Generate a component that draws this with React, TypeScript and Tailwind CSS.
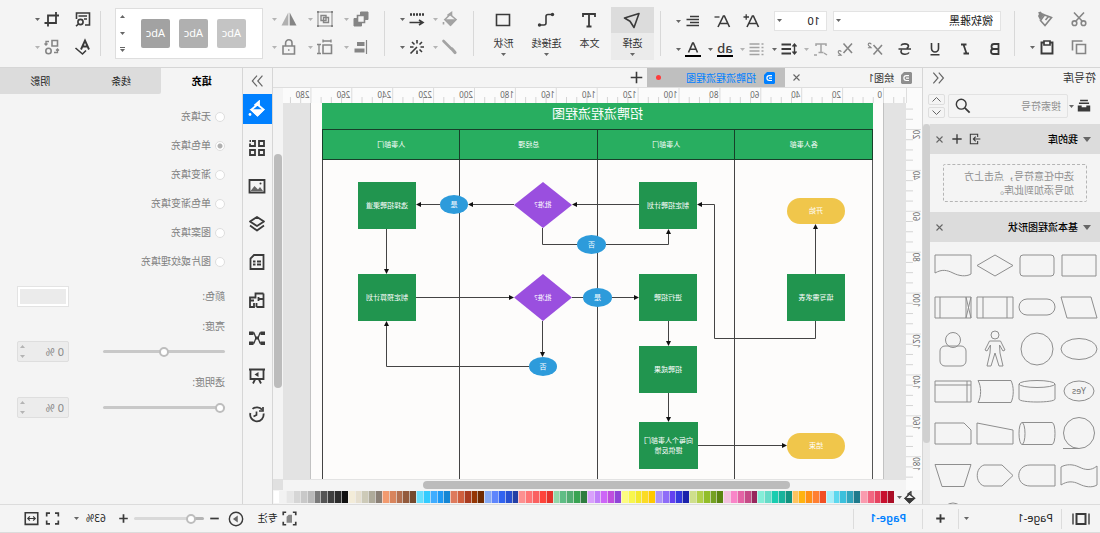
import React from "react";

type Kids = { children?: React.ReactNode };

/* ---------- small building blocks ---------- */

function Icon({ children, size = 18, color = "text-[#3a3a3a]" }: Kids & { size?: number; color?: string }) {
  return (
    <svg
      width={size}
      height={size}
      viewBox="0 0 18 18"
      fill="none"
      stroke="currentColor"
      strokeWidth={1.6}
      className={`shrink-0 ${color}`}
      aria-hidden="true"
    >
      {children}
    </svg>
  );
}

function Caret({ light = false }: { light?: boolean }) {
  return (
    <svg width="5" height="3" viewBox="0 0 5 3" className={light ? "text-[#b4b4b4]" : "text-[#666]"} aria-hidden="true">
      <path d="M0 0h5L2.5 3z" fill="currentColor" />
    </svg>
  );
}

function Tool({
  label,
  children,
  caret,
  tone = "dark",
}: Kids & { label: string; caret?: boolean; tone?: "dark" | "mid" | "light" }) {
  const color = tone === "dark" ? "text-[#3a3a3a]" : tone === "mid" ? "text-[#858585]" : "text-[#a3a3a3]";
  return (
    <button type="button" aria-label={label} className="flex h-7 shrink-0 items-center">
      <span className="flex w-5 justify-center">
        <Icon color={color}>{children}</Icon>
      </span>
      {caret && (
        <span className="flex w-2 justify-center">
          <Caret light={tone !== "dark"} />
        </span>
      )}
    </button>
  );
}

const Separator = () => <div className="mt-[11px] h-[45px] w-px shrink-0 bg-[#d8d8d8]" />;

/* ---------- toolbar ---------- */

function FontGroup() {
  return (
    <div className="w-[353px] shrink-0 pt-[7px] pl-[9px]">
      <div className="flex h-7 items-center pl-1">
        <div className="relative">
          <select
            aria-label="字体"
            className="block h-5 w-[168px] appearance-none border border-[#e3e3e3] bg-white pl-[7px] text-[11px] leading-[18px] text-[#222]"
          >
            <option>微软雅黑</option>
          </select>
          <span className="pointer-events-none absolute top-2 right-[3px]">
            <Caret />
          </span>
        </div>
        <div className="relative ml-[6px]">
          <select
            aria-label="字号"
            className="block h-5 w-[53px] appearance-none border border-[#e3e3e3] bg-white pl-[6px] text-[11px] leading-[18px] text-[#222]"
          >
            <option>10</option>
          </select>
          <span className="pointer-events-none absolute top-2 right-[3px]">
            <Caret />
          </span>
        </div>
        <div className="flex gap-[9px] pl-[13px]">
          <Tool label="增大字号">
            <path d="M1.5 15L6.600 4h1l5.400 11M3.500 11.500h7.500" />
            <path d="M11 5h5.500M13.800 2.200v5.500" strokeWidth={1.3} />
          </Tool>
          <Tool label="减小字号">
            <path d="M1.5 15L6.600 4h1l5.400 11M3.500 11.500h7.500" />
            <path d="M11.500 5h5" strokeWidth={1.3} />
          </Tool>
          <Tool label="对齐" caret>
            <path d="M3 4.500h9M3 7.500h12.500M3 10.500h9M3 13.500h12.500" />
          </Tool>
        </div>
      </div>
      <div className="flex h-7 items-center">
        <div className="flex gap-[10px]">
          <Tool label="加粗">
            <path d="M5.500 4h4.500a2.400 2.400 0 010 5H5.500zM5.500 9h5a2.500 2.500 0 010 5h-5z" strokeWidth={1.8} />
          </Tool>
          <Tool label="斜体">
            <path d="M7.500 4.500H13M5 13.500h5.500M10.500 4.500l-3 9" strokeWidth={1.8} />
          </Tool>
          <Tool label="下划线">
            <path d="M5.500 3v5.500a3.500 3.500 0 007 0V3M4.500 14.800h9" />
          </Tool>
          <Tool label="删除线">
            <path d="M13 5.500C12 3.500 6 3 5.500 6c0 1 .8 1.800 1.800 2.200M5 12.500c1 2.200 7.500 2.500 8-.7 0-.8-.2-1.300-.7-1.800M3 9h12.500" />
          </Tool>
          <Tool label="上标" tone="mid">
            <path d="M2 5l8.500 9.500M10.500 5L2 14.500" />
            <path d="M12.800 4.300c.3-1.700 3-1.600 3 .2 0 1.300-2 2-3 3.300h3.300" strokeWidth={1.1} />
          </Tool>
        </div>
        <div className="flex gap-1 pl-[10px]">
          <Tool label="下标" tone="mid">
            <path d="M2 3.500L10.500 13M10.500 3.500L2 13" />
            <path d="M12.800 11.800c.3-1.700 3-1.600 3 .2 0 1.300-2 2-3 3.300h3.300" strokeWidth={1.1} />
          </Tool>
          <Tool label="文字方向" caret tone="light">
            <path d="M4 6V4h10v2M9 4v8M6.500 12.500h5M3 15l3-2M13 15h3" strokeWidth={1.5} />
          </Tool>
          <Tool label="行距" caret>
            <path d="M7 4.500h9.500M7 9h9.500M7 13.500h9.500" strokeWidth={2} />
            <path d="M3.500 5v8M1.500 6.500l2-2.500 2 2.500M1.500 11.500l2 2.500 2-2.500" strokeWidth={1.4} />
          </Tool>
          <Tool label="项目符号" caret tone="light">
            <path d="M6.500 4h10M6.500 7.500h10M6.500 11h10M6.500 14.500h10M2.500 4h2M2.500 7.500h2M2.500 11h2M2.500 14.500h2" strokeWidth={1.5} />
          </Tool>
          <button type="button" aria-label="突出显示" className="flex h-7 shrink-0 items-center">
            <span className="flex w-5 justify-center">
              <span className="border-b-2 border-black text-[13px] leading-[13px] font-medium text-[#3a3a3a]">ab</span>
            </span>
            <span className="flex w-2 justify-center">
              <Caret />
            </span>
          </button>
          <Tool label="字体颜色" caret>
            <path d="M4.500 12.500L8.600 3h.8l4.100 9.500M6 9.300h6" strokeWidth={1.6} />
            <path d="M1 16h16" stroke="#000" strokeWidth={2} />
          </Tool>
        </div>
      </div>
    </div>
  );
}

function BigTool({ label, children, caret, active }: Kids & { label: string; caret?: boolean; active?: boolean }) {
  return (
    <button
      type="button"
      className={`flex h-[53px] w-[43px] flex-col items-center ${active ? "bg-[#ebebeb]" : ""}`}
    >
      <span className={`flex h-[26px] w-full items-center justify-center ${active ? "bg-[#dcdcdc]" : ""}`}>
        <Icon>{children}</Icon>
      </span>
      <span className="mt-1 text-[10px] leading-3 text-[#333]">{label}</span>
      {caret && (
        <span className="mt-1">
          <Caret />
        </span>
      )}
    </button>
  );
}

function ThemeGallery() {
  return (
    <div className="mt-2 flex h-[51px] w-[148px] shrink-0 items-center border border-[#dedede] bg-white pl-4">
      <div className="flex gap-[9px]">
        <button type="button" className="h-[29px] w-[29px] rounded-xs bg-[#c4c4c4] text-[11px] text-white">Abc</button>
        <button type="button" className="h-[29px] w-[29px] rounded-xs bg-[#b0b0b0] text-[11px] text-white">Abc</button>
        <button type="button" className="h-[29px] w-[29px] rounded-xs bg-[#a2a2a2] text-[11px] text-white">Abc</button>
      </div>
      <div className="flex flex-1 flex-col items-center gap-[10px] pl-3">
        <button type="button" aria-label="上一行" className="flex h-[7px] rotate-180 items-center"><Caret /></button>
        <button type="button" aria-label="下一行" className="flex h-[7px] items-center"><Caret /></button>
        <button type="button" aria-label="更多样式" className="flex h-[7px] flex-col items-center gap-px">
          <span className="h-px w-[5px] bg-[#666]" />
          <Caret />
        </button>
      </div>
    </div>
  );
}

function Toolbar() {
  return (
    <header className="flex h-[68px] shrink-0 overflow-hidden border-b border-[#d6d6d6]">
      <div className="w-[85px] shrink-0 pt-[5px] pl-[11px]">
        <div className="flex gap-[14px]">
          <Tool label="剪切" tone="mid">
            <path d="M4 2.500l8.500 9M14 2.500l-8.500 9" />
            <circle cx="4.500" cy="13.200" r="2.300" />
            <circle cx="13.500" cy="13.200" r="2.300" />
          </Tool>
          <Tool label="格式刷" tone="mid">
            <path d="M2.500 7.500L9.500 5l4 5.500L9 15.500z" />
            <path d="M9.500 4l4.500 6 2-4-1-2 1-1.500-2.500-1-1.500 1.500z" fill="currentColor" stroke="none" />
            <path d="M5.500 6.500l3 3.500" />
          </Tool>
        </div>
        <div className="flex gap-3">
          <Tool label="复制" tone="mid">
            <path d="M2.500 6.500h9v9h-9z" />
            <path d="M5.500 3H15.500v9.500" />
          </Tool>
          <Tool label="粘贴" caret>
            <path d="M6 4.500H3.500v11h11v-11H12" strokeWidth={1.9} />
            <path d="M6 3h6v4H6z" strokeWidth={1.7} />
          </Tool>
        </div>
      </div>
      <Separator />
      <FontGroup />
      <Separator />
      <div className="flex w-[186px] shrink-0 pt-[7px] pl-[6px]">
        <BigTool label="选择" caret active>
          <path d="M2 2.500l14.500 4.500-5.500 3.200L7 16.500z" strokeLinejoin="round" />
        </BigTool>
        <BigTool label="文本">
          <path d="M3 6V3h12v3M9 3v12.500M6.500 15.500h5" strokeWidth={1.8} />
        </BigTool>
        <BigTool label="连接线" caret>
          <path d="M3 3.500h4a2 2 0 012 2V12a2 2 0 002 2h4" />
          <circle cx="2.500" cy="3.500" r="1.700" fill="currentColor" stroke="none" />
          <circle cx="15.500" cy="14" r="1.700" fill="currentColor" stroke="none" />
        </BigTool>
        <BigTool label="形状" caret>
          <path d="M2.500 3.500h13v11h-13z" />
        </BigTool>
      </div>
      <Separator />
      <div className="w-[88px] shrink-0 pt-[5px] pl-[13px]">
        <div className="flex gap-[5px]">
          <Tool label="填充" caret tone="light">
            <path d="M3 9.500L9 4.500l5 5-5.500 5.500z" />
            <path d="M4 10h9.500l-5 5z" fill="currentColor" />
            <path d="M7.500 6V2.500l4 3M15.500 12v2.500" />
          </Tool>
          <Tool label="线型" caret>
            <path d="M2 4.500h14" strokeDasharray="2 1" strokeWidth={2.4} />
            <path d="M4 12.500h12.500M7 10l-4 2.500L7 15" />
          </Tool>
        </div>
        <div className="flex gap-[5px]">
          <Tool label="线条颜色" caret tone="light">
            <path d="M15.500 3L8 10.500" strokeWidth={2.6} strokeLinecap="round" />
            <path d="M7 11l-3 3.500" strokeWidth={3.2} strokeLinecap="round" />
          </Tool>
          <Tool label="效果" caret>
            <path d="M9 2v3.500M9 12.500V16M2 9h3.500M12.500 9H16M4 4l2.500 2.500M4 14l2.500-2.500M14 4l-2.500 2.500M9 9l6.500 6.500" />
          </Tool>
        </div>
      </div>
      <Separator />
      <div className="w-[121px] shrink-0 pt-[5px] pl-[13px]">
        <div className="flex gap-2">
          <Tool label="叠放次序" caret tone="mid">
            <path d="M2 2h7.500v7.500H2zM8.500 8.500H16V16H8.500z" fill="currentColor" strokeWidth={1} />
            <path d="M5.500 5.500h7v7h-7z" fill="#f4f4f4" />
          </Tool>
          <Tool label="组合" caret tone="mid">
            <path d="M2 2h14v14H2z" strokeWidth={1} />
            <path d="M5.500 7.500h5v5h-5zM8 5.500h5v5H8z" strokeWidth={1.4} />
            <path d="M1 1h2v2H1zM15 1h2v2h-2zM1 15h2v2H1zM15 15h2v2h-2z" fill="currentColor" stroke="none" />
          </Tool>
          <Tool label="翻转" caret tone="mid">
            <path d="M8.300 2.500v13H1.500z" fill="currentColor" stroke="none" />
            <path d="M9.700 2.500v13h6.800z" fill="#b0b0b0" stroke="none" />
          </Tool>
        </div>
        <div className="flex gap-2">
          <Tool label="对齐形状" caret tone="mid">
            <path d="M3.500 2v14" strokeWidth={1.2} />
            <path d="M5.500 4h7.500v4H5.500zM5.500 10.500h10v4h-10z" fill="currentColor" stroke="none" />
          </Tool>
          <Tool label="尺寸" caret tone="mid">
            <path d="M2.500 7h8.500v8.500H2.500z" />
            <path d="M2.500 3h8.500M3 1.500v3M11 1.500v3M15 6.500v9M13 6.500h4M13 15.500h4" strokeWidth={1.3} />
          </Tool>
          <Tool label="锁定" caret tone="mid">
            <path d="M3.500 8h11.500v8H3.500zM6 8V5a3.200 3.200 0 016.400 0v3" />
            <path d="M8.500 12h1.500" />
          </Tool>
        </div>
      </div>
      <ThemeGallery />
      <div className="ml-[14px] flex">
        <Separator />
      </div>
      <div className="shrink-0 pt-[5px] pl-[7px]">
        <div className="flex gap-[11px]">
          <Tool label="查找替换">
            <path d="M7 15H2.500V3h13v6M5 6h8.500M5 9h3" />
            <circle cx="11.500" cy="12" r="2.600" />
            <path d="M13.500 14l2.500 2.200" />
          </Tool>
          <Tool label="裁剪" caret>
            <path d="M5 2v11h11.500M2 5.500h11V16.500" strokeWidth={1.8} />
          </Tool>
        </div>
        <div className="flex gap-[11px]">
          <Tool label="拼写检查">
            <path d="M3 11.500L7 2.500l4 9M4.500 8.500h5" strokeWidth={1.9} />
            <path d="M6 12.500l3.500 3.500 7-6" />
          </Tool>
          <Tool label="替换形状" caret tone="mid">
            <path d="M3.500 2.500h5.500v5.500H3.500z" />
            <circle cx="12.500" cy="13" r="2.700" />
            <path d="M12 3.500h3v3.500M13.500 5.500L15 7l1.500-1.500M7 14.500H3.500V11M2 12.500L3.500 11 5 12.500" strokeWidth={1.3} />
          </Tool>
        </div>
      </div>
    </header>
  );
}

/* ---------- symbol library ---------- */

const shapes: { name: string; node: React.ReactNode }[] = [
  { name: "流程", node: <path d="M3 10h34v21H3z" /> },
  { name: "圆角矩形", node: <rect x="3" y="10" width="34" height="21" rx="3" /> },
  { name: "判定", node: <path d="M20 10l18 10.500-18 10.500L2 20.500z" /> },
  { name: "文档", node: <path d="M2 10h36v18c-7-4-12-3-18 0s-13 4-18 1z" /> },
  { name: "数据", node: <path d="M8 10h30l-6 21H2z" /> },
  { name: "终止符", node: <rect x="2" y="12" width="36" height="16" rx="8" /> },
  { name: "预定义流程", node: <path d="M2 10h36v21H2zM8 10v21M32 10v21" /> },
  { name: "外部流程", node: <path d="M2 10h36v21H2zM7 10v21M33 10v21M2 10l5 21M7 10L2 31" /> },
  { name: "椭圆", node: <ellipse cx="20" cy="20" rx="18" ry="10.500" /> },
  { name: "圆形", node: <circle cx="20" cy="20" r="16" /> },
  {
    name: "人",
    node: (
      <>
        <circle cx="20" cy="6" r="4" />
        <path d="M14.500 12h11l4.500 9-2 1-3.500-6 .5 8 3 13h-4l-4-13-4 13h-4l3-13 .5-8-3.500 6-2-1z" />
      </>
    ),
  },
  {
    name: "用户",
    node: (
      <>
        <circle cx="20" cy="11" r="7.500" />
        <rect x="7" y="17" width="26" height="20" rx="5" />
      </>
    ),
  },
  {
    name: "是或否",
    node: (
      <>
        <ellipse cx="20" cy="20" rx="15" ry="10" />
        <text x="20" y="23" textAnchor="middle" fontSize="9" fill="#777" stroke="none">Yes</text>
      </>
    ),
  },
  {
    name: "数据库",
    node: (
      <>
        <ellipse cx="20" cy="13" rx="18" ry="3.500" />
        <path d="M2 13v15c0 4 36 4 36 0V13" />
      </>
    ),
  },
  { name: "存储数据", node: <path d="M4 9.500h33c-3.500 6-3.500 16 0 22H4c-3-6-3-16 0-22z" /> },
  { name: "内部存储", node: <path d="M2 10h36v21H2zM6 10v21M2 14h36" /> },
  {
    name: "顺序数据",
    node: (
      <>
        <circle cx="20" cy="20" r="15.500" />
        <path d="M20 35.500h16" />
      </>
    ),
  },
  {
    name: "直接数据",
    node: (
      <>
        <ellipse cx="35" cy="20.500" rx="3" ry="11" />
        <path d="M35 9.500H5c-4 0-4 22 0 22h30" />
      </>
    ),
  },
  { name: "手动输入", node: <path d="M2 17L38 10v21H2z" /> },
  { name: "卡片", node: <path d="M9 10h29v21H2V17z" /> },
  { name: "纸带", node: <path d="M2 11c6 5 12 4 18 1s13-3 18 0v18c-6-4-12-4-18-1s-13 4-18 1z" /> },
  { name: "延期", node: <path d="M2 10h25c15 0 15 21 0 21H2z" /> },
  { name: "显示", node: <path d="M2 20.500L13 10h18c9 3 9 18 0 21H13z" /> },
  { name: "手动操作", node: <path d="M2 9.500h36l-7 22H9z" /> },
];

function SectionHead({ title, extra }: { title: string; extra?: boolean }) {
  return (
    <div className="flex h-[30px] shrink-0 items-center bg-[#dcdcdc] pr-[2px] pl-[9px]">
      <button type="button" className="flex items-center gap-[5px] text-[10px] leading-3 font-medium text-black">
        <svg width="8" height="5" viewBox="0 0 8 5" aria-hidden="true">
          <path d="M0 0h8L4 5z" fill="#666" />
        </svg>
        {title}
      </button>
      <div className="ml-auto flex">
        {extra && (
          <>
            <button type="button" aria-label="导入" className="flex w-[18px] justify-center">
              <Icon size={12}>
                <path d="M5 6V2h11v14H5v-4M1 9h10M8 5.500L11.500 9 8 12.500" />
              </Icon>
            </button>
            <button type="button" aria-label="添加" className="flex w-[18px] justify-center">
              <Icon size={12}>
                <path d="M9 2v14M2 9h14" strokeWidth={2} />
              </Icon>
            </button>
          </>
        )}
        <button type="button" aria-label="关闭" className="flex w-4 items-center justify-center">
          <Icon size={9} color="text-[#666]">
            <path d="M3 3l12 12M15 3L3 15" strokeWidth={2.2} />
          </Icon>
        </button>
      </div>
    </div>
  );
}

function LibraryPanel() {
  return (
    <aside className="flex w-[178px] shrink-0 flex-col border-r border-[#d6d6d6]">
      <div className="flex h-5 items-center justify-between pr-2 pl-1">
        <h2 className="text-[11px] leading-4 text-[#333]">符号库</h2>
        <button type="button" aria-label="收起">
          <Icon size={14} color="text-[#666]">
            <path d="M8 2L2 9l6 7M15 2L9 9l6 7" strokeWidth={1.5} />
          </Icon>
        </button>
      </div>
      <div className="flex h-9 items-center pr-1 pl-[9px]">
        <button type="button" aria-label="选择库" className="flex w-[23px] items-center gap-[3px]">
          <Icon size={14}>
            <path d="M4 2h10M2.500 5.500h13" strokeWidth={1.800} />
            <path d="M1 8.500h5v2h6v-2h5v7.500H1z" fill="currentColor" stroke="none" />
          </Icon>
          <Caret />
        </button>
        <label className="flex h-[24px] w-[120px] items-center rounded-xs border border-[#e2e2e2] px-[6px]">
          <input
            aria-label="搜索符号"
            placeholder="搜索符号"
            className="w-0 flex-1 bg-transparent text-[10px] leading-4 outline-none placeholder:text-[#909090]"
          />
          <Icon size={16}>
            <circle cx="11" cy="7" r="5.500" />
            <path d="M7 11l-5.500 5.500" strokeWidth={2} />
          </Icon>
        </label>
        <div className="ml-[3px] flex flex-col gap-[2px]">
          <button type="button" aria-label="上一个" className="flex h-[11px] w-[17px] items-center justify-center rounded-xs border border-[#dedede]">
            <Icon size={9} color="text-[#666]"><path d="M1 13l8-8 8 8" strokeWidth={2} /></Icon>
          </button>
          <button type="button" aria-label="下一个" className="flex h-[11px] w-[17px] items-center justify-center rounded-xs border border-[#dedede]">
            <Icon size={9} color="text-[#666]"><path d="M1 5l8 8 8-8" strokeWidth={2} /></Icon>
          </button>
        </div>
      </div>
      <div className="flex min-h-0 flex-1">
        <div className="flex min-w-0 flex-1 flex-col overflow-hidden">
          <SectionHead title="我的库" extra />
          <div className="px-[13px] py-[10px]">
            <p className="rounded-xs border border-dashed border-[#b5b5b5] py-1 pl-3 text-[10px] leading-[14px] text-[#909090]">
              选中任意符号，点击上方
              <br />
              加号添加到此库。
            </p>
          </div>
          <SectionHead title="基本流程图形状" />
          <div className="grid w-[168px] shrink-0 grid-cols-4 pt-[2px]">
            {shapes.map((s) => (
              <button key={s.name} type="button" aria-label={s.name} className="flex h-[42px] items-center justify-center">
                <svg width="40" height="40" viewBox="0 0 40 40" fill="none" stroke="#8e8e8e" strokeWidth="1" aria-hidden="true">
                  {s.node}
                </svg>
              </button>
            ))}
          </div>
          <svg width="168" height="10" viewBox="0 0 168 10" fill="none" stroke="#8e8e8e" className="mt-1 shrink-0" aria-hidden="true">
            <circle cx="147" cy="13" r="10" />
          </svg>
        </div>
        <div className="w-[7px] bg-[#ebebeb]">
          <div className="h-[84%] rounded-full bg-[#d0d0d0]" />
        </div>
      </div>
    </aside>
  );
}

/* ---------- canvas ---------- */

const STEP = 40.9;

function HorizontalRuler() {
  const majors = Array.from({ length: 15 }, (_, i) => i);
  const minors = Array.from({ length: 62 }, (_, i) => i - 2).filter((i) => i % 4 !== 0);
  return (
    <svg className="h-[15px] min-w-0 flex-1 bg-[#fbfbfb]" aria-hidden="true">
      {minors.map((i) => (
        <path key={i} d={`M${22.5 + (i * STEP) / 4} 9v6`} stroke="#d4d4d4" />
      ))}
      {majors.map((i) => (
        <g key={i}>
          <path d={`M${22.5 + i * STEP} 0v15`} stroke="#dcdcdc" />
          <text x={24 + i * STEP} y="10" fontSize="8" fill="#6a6a6a">{i * 20}</text>
        </g>
      ))}
    </svg>
  );
}

function VerticalRuler() {
  const majors = Array.from({ length: 9 }, (_, i) => i);
  const minors = Array.from({ length: 38 }, (_, i) => i - 2).filter((i) => i % 4 !== 0);
  return (
    <svg className="h-full w-4 shrink-0 bg-[#fbfbfb]" aria-hidden="true">
      {minors.map((i) => (
        <path key={i} d={`M9 ${26.5 + (i * STEP) / 4}h7`} stroke="#d4d4d4" />
      ))}
      {majors.map((i) => (
        <g key={i}>
          <path d={`M1 ${26.5 + i * STEP}h15`} stroke="#dcdcdc" />
          <text
            x="9"
            y={27 + i * STEP}
            fontSize="8"
            fill="#6a6a6a"
            textAnchor="end"
            transform={`rotate(-90 9 ${27 + i * STEP})`}
          >
            {(i + 1) * 20}
          </text>
        </g>
      ))}
    </svg>
  );
}

type Kind = "box" | "pill" | "oval" | "diamond";
const nodes: { kind: Kind; x: number; y: number; w: number; h: number; text: string }[] = [
  { kind: "pill", x: 38, y: 95, w: 58, h: 26, text: "开始" },
  { kind: "box", x: 38, y: 171, w: 58, h: 47, text: "填写需求表" },
  { kind: "box", x: 186, y: 79, w: 58, h: 47, text: "制定招聘计划" },
  { kind: "diamond", x: 311, y: 79, w: 58, h: 46, text: "批准?" },
  { kind: "oval", x: 415, y: 92, w: 28, h: 19, text: "是" },
  { kind: "box", x: 467, y: 79, w: 58, h: 47, text: "选择招聘渠道" },
  { kind: "oval", x: 277, y: 132, w: 29, h: 19, text: "否" },
  { kind: "box", x: 186, y: 171, w: 58, h: 47, text: "进行招聘" },
  { kind: "oval", x: 271, y: 185, w: 29, h: 19, text: "是" },
  { kind: "diamond", x: 311, y: 171, w: 58, h: 47, text: "批准?" },
  { kind: "box", x: 467, y: 171, w: 58, h: 47, text: "制定预算计划" },
  { kind: "oval", x: 326, y: 254, w: 28, h: 19, text: "否" },
  { kind: "box", x: 186, y: 243, w: 58, h: 47, text: "招聘成果" },
  { kind: "box", x: 185, y: 319, w: 59, h: 47, text: "向每个人事部门\n提供反馈" },
  { kind: "pill", x: 38, y: 330, w: 58, h: 26, text: "结束" },
];

const kindClass: Record<Kind, string> = {
  box: "bg-[#21954f]",
  pill: "rounded-full bg-[#f0c64b]",
  oval: "rounded-[50%] bg-[#2d9bdb]",
  diamond: "bg-[#9a4fdf] [clip-path:polygon(50%_0,100%_50%,50%_100%,0_50%)]",
};

const arrows = [
  "M67.5 171V122",
  "M67.5 218V235.500H168.500V101.500H185",
  "M244 101.500H310",
  "M369 101.500H414",
  "M443 101.500H466",
  "M277 141.500H214.500V127",
  "M496.500 126V170",
  "M467 194.500H370",
  "M271 194.500H245",
  "M340.500 218V253",
  "M354 263.500H496.500V219",
  "M214.500 218V242",
  "M214.500 290V318",
  "M185 342.500H97",
];
const plainLines = ["M340.5 125V141.500H306", "M311 194.500H300"];

const lanes = ["各人事部", "人事部门", "总经理", "人事部门"];

function FlowChart() {
  return (
    <div className="relative ml-[22px] flex h-full w-[574px] flex-col border-x border-[#c2c2c2] bg-[#fdfcfb] pr-[11px] pl-[10px]">
      <div className="flex h-[26px] shrink-0 items-start justify-center bg-[#28ae60] pt-[1px] text-[13px] leading-[18px] text-white">
        招聘流程流程图
      </div>
      <div className="grid h-[31px] shrink-0 grid-cols-4 border-y border-l border-[#17402a] bg-[#28ae60]">
        {lanes.map((name, i) => (
          <div key={i} className="flex items-center justify-center border-r border-[#17402a] text-[7px] leading-[10px] text-white">
            {name}
          </div>
        ))}
      </div>
      <div className="grid min-h-0 flex-1 grid-cols-4 border-l border-[#555]">
        {lanes.map((_, i) => (
          <div key={i} className="border-r border-[#444]" />
        ))}
      </div>
      <svg width="572" height="400" viewBox="0 0 572 400" fill="none" stroke="#444" className="absolute top-0 left-0" aria-hidden="true">
        <defs>
          <marker id="head" markerUnits="userSpaceOnUse" markerWidth="5" markerHeight="5" refX="4" refY="2.5" orient="auto">
            <path d="M0 0l5 2.500L0 5z" fill="#111" stroke="none" />
          </marker>
        </defs>
        {arrows.map((d) => (
          <path key={d} d={d} markerEnd="url(#head)" />
        ))}
        {plainLines.map((d) => (
          <path key={d} d={d} />
        ))}
      </svg>
      {nodes.map((n, i) => (
        <div
          key={i}
          className={`absolute flex items-center justify-center text-center text-[7px] leading-[10px] whitespace-pre text-white ${kindClass[n.kind]}`}
          style={{ left: n.x, top: n.y, width: n.w, height: n.h }}
        >
          {n.text}
        </div>
      ))}
    </div>
  );
}

const palette = (
  "aa0d26 c8102e e64360 f26580 fa9bae 1f7a8c 32a5bd 3cc0dc 5cd8ee a6f0fa f15024 ff7f32 ff9015 ffb30f ffc35e " +
  "129380 17b39c 1acdb0 66dcc8 84eed8 97275c c64b87 e464a5 f985c8 f2c1de 5a8511 74a123 92bd28 b2d04a cfdf8c " +
  "1b22ab 3439dd 6341f0 8e6cf8 ab93fb ffc800 fbdb26 f3e92d f8f64e fdfc80 9044d8 bf4ede cd66f7 c07ff9 d9a0fc " +
  "2f7d41 38a352 52ad72 5fbd85 92d7a9 e5322a fe443a fa6060 ff7575 fd9090 223fa5 2850d0 3163f0 5e85fc 86aaf5 " +
  "702b02 953604 a93b20 cf5f3e de7a5c 1486d4 1f9af5 40adff 33ccff 66e0ff 744a2e 935a3c b37050 d8845c f29a6f " +
  "8a7f75 aeaa9a cdcab8 e6dfcf f3ecd9 111111 2c2c2c 3f3f3f 555555 7a7a7a b9b9b9 c8c8c8 d6d6d6 e6e6e6 f2f2f2 ffffff"
).split(" ");

function DocIcon({ active }: { active?: boolean }) {
  return (
    <svg width="11" height="12" viewBox="0 0 11 12" fill="none" aria-hidden="true">
      <path d="M1 0h7l3 3v8l-1 1H1l-1-1V1z" fill={active ? "#0080ff" : "#8f8f8f"} />
      <path d="M3 3.700h2.700a2.400 2.400 0 010 4.800H3M3 6.100h3" stroke="#fff" strokeWidth="1.200" />
    </svg>
  );
}

function Workspace() {
  return (
    <main className="flex min-w-0 flex-1 flex-col">
      <div className="flex h-5 shrink-0 items-center border-b border-[#dedede] text-[10px] leading-4">
        <div className="flex h-full w-[137px] items-center pr-1 pl-[10px]">
          <DocIcon />
          <button type="button" className="ml-[7px] text-[#333]">绘图1</button>
          <button type="button" aria-label="关闭绘图1" className="ml-auto flex w-4 justify-center">
            <Icon size={9} color="text-[#666]"><path d="M3 3l12 12M15 3L3 15" strokeWidth={2.2} /></Icon>
          </button>
        </div>
        <div className="flex h-full w-[138px] items-center bg-[#bfbfbf] pr-[9px] pl-[10px]">
          <DocIcon active />
          <button type="button" className="ml-[8px] text-[#0080ff]">招聘流程流程图</button>
          <span className="ml-auto h-[5px] w-[5px] rounded-full bg-[#ff3b3b]" />
        </div>
        <button type="button" aria-label="新建" className="ml-1">
          <Icon size={13}><path d="M9 1v16M1 9h16" strokeWidth={2.2} /></Icon>
        </button>
      </div>
      <div className="flex h-[15px] shrink-0">
        <div className="w-4 shrink-0 border-r border-[#dedede] bg-[#fbfbfb]" />
        <HorizontalRuler />
        <div className="w-[10px] shrink-0" />
      </div>
      <div className="flex min-h-0 flex-1">
        <VerticalRuler />
        <div className="min-w-0 flex-1 overflow-hidden bg-[#e3e3e3]">
          <FlowChart />
        </div>
        <div className="w-[10px] shrink-0 pt-[51px] pl-px">
          <div className="h-[234px] w-2 rounded-full bg-[#bcbcbc]" />
        </div>
      </div>
      <div className="flex h-[11px] shrink-0">
        <div className="w-4 shrink-0 bg-[#fbfbfb]" />
        <div className="min-w-0 flex-1 border-t border-[#e3e3e3] pt-px pl-[116px]">
          <div className="h-2 w-[367px] rounded-full bg-[#bcbcbc]" />
        </div>
        <div className="w-[10px] shrink-0 bg-[#e0e0e0]" />
      </div>
      <div className="flex h-[14px] shrink-0 items-center">
        <button type="button" aria-label="填充颜色" className="flex w-7 shrink-0 items-center justify-end gap-px pr-[3px]">
          <Icon size={13}>
            <path d="M2 10l7-6 6 6-6 6z" strokeWidth={2} />
            <path d="M3 10.500h12l-6 6z" fill="currentColor" />
            <path d="M7 6V1l5 4" strokeWidth={1.8} />
          </Icon>
          <Caret />
        </button>
        <div className="flex h-3 min-w-0 flex-1">
          {palette.map((c) => (
            <button
              key={c}
              type="button"
              aria-label={`#${c}`}
              className="min-w-0 flex-1 border-r border-[#f4f4f4]/60"
              style={{ backgroundColor: `#${c}` }}
            />
          ))}
        </div>
      </div>
    </main>
  );
}

/* ---------- format panel ---------- */

const sideTools: { name: string; node: React.ReactNode }[] = [
  {
    name: "主题",
    node: <path d="M2 2h5v5H2zM2 11h5v5H2zM11 11h5v5h-5zM14 2h-3v5h5V4.500M15 2h1.500" strokeWidth={1.8} />,
  },
  {
    name: "图片",
    node: (
      <>
        <path d="M1.500 3h15v12.500h-15z" strokeWidth={1.8} />
        <path d="M3 14l3-4 2 2.500L11.500 9l4 5z" fill="#666" stroke="none" />
        <circle cx="5.500" cy="6.500" r="1" fill="currentColor" stroke="none" />
      </>
    ),
  },
  {
    name: "图层",
    node: <path d="M9 2l7 4.500-7 4.500-7-4.500zM2 10.500L9 15.500l7-5" strokeLinejoin="round" strokeWidth={1.800} />,
  },
  {
    name: "页面",
    node: <path d="M2.500 2h9.500l3.500 3.500V16h-13zM5 8.500h4M10.500 8.500H13M5 11.500h4M10.500 11.500H13" strokeWidth={1.8} />,
  },
  {
    name: "平面图",
    node: <path d="M2.500 2.500h8v4h5.500v9.500h-4v-4M2.500 2.500V16h7M2.500 8h5M7.500 6v4M12 9.500h4M9.500 16v-4" strokeWidth={1.8} />,
  },
  {
    name: "结构",
    node: (
      <>
        <path d="M4 4h2l2 5h2l2-5h2M4 14h2l2-5M10 9l2 5h2" strokeWidth={1.3} />
        <path d="M1 2.500h4.500v3.500H1zM12.500 2.500H17v3.500h-4.500zM1 12.500h4.500v3.500H1zM12.500 12.500H17v3.500h-4.500zM7 7.500h4v3H7z" fill="currentColor" stroke="none" />
      </>
    ),
  },
  {
    name: "演示",
    node: (
      <>
        <path d="M1 2.500h16M2.500 2.500v9.500h13V2.500M7 12.500L5 16.500M11 12.500l2 4" strokeWidth={1.8} />
        <path d="M7.500 5l4 2.500-4 2.500z" fill="currentColor" stroke="none" />
      </>
    ),
  },
  {
    name: "历史",
    node: (
      <>
        <path d="M4 4.700A6.700 6.700 0 0113.500 3.900M15.600 8A6.700 6.700 0 112.500 8.500" strokeWidth={1.8} />
        <path d="M3 2v4h4M9.500 6.500V10l3 1.500" strokeWidth={1.700} />
      </>
    ),
  },
];

function SideStrip() {
  return (
    <nav className="flex w-[31px] shrink-0 flex-col items-center border-x border-[#d6d6d6]">
      <button type="button" aria-label="收起面板" className="flex h-[26px] items-center">
        <Icon size={14} color="text-[#666]">
          <path d="M2 2l6 7-6 7M9 2l6 7-6 7" strokeWidth={1.5} />
        </Icon>
      </button>
      <button type="button" aria-label="填充" className="flex h-[30px] w-full shrink-0 items-center justify-center bg-[#0080ff]">
        <Icon color="text-white">
          <path d="M2.500 9.500L8.500 4.500l6 5-6 6z" strokeWidth={1.9} />
          <path d="M3 10h11.500l-6 5.500z" fill="currentColor" />
          <path d="M7 6V1.500l4.500 4" strokeWidth={1.800} />
          <circle cx="16" cy="14.500" r="1.400" fill="currentColor" stroke="none" />
        </Icon>
      </button>
      <div className="flex flex-col pt-[5px]">
        {sideTools.map((t) => (
          <button key={t.name} type="button" aria-label={t.name} className="flex h-[38px] items-center justify-center">
            <Icon>{t.node}</Icon>
          </button>
        ))}
      </div>
    </nav>
  );
}

const fills = ["无填充", "单色填充", "渐变填充", "单色渐变填充", "图案填充", "图片或纹理填充"];

const rangeClass =
  "block h-[3px] appearance-none rounded-full [&::-webkit-slider-thumb]:h-[10px] [&::-webkit-slider-thumb]:w-[10px] [&::-webkit-slider-thumb]:appearance-none [&::-webkit-slider-thumb]:rounded-full [&::-webkit-slider-thumb]:border-2 [&::-webkit-slider-thumb]:border-[#bdbdbd] [&::-webkit-slider-thumb]:bg-white";

function SliderRow({ id, label, value }: { id: string; label: string; value: number }) {
  return (
    <div className="mt-[13px]">
      <label htmlFor={id} className="block leading-[14px]">{label}</label>
      <div className="mt-2 flex h-[21px] items-center justify-between">
        <input id={id} type="range" defaultValue={value} className={`w-[122px] bg-[#c8c8c8] ${rangeClass}`} />
        <div className="relative">
          <input
            type="text"
            aria-label={`${label}数值`}
            defaultValue="0 %"
            className="block h-[21px] w-[52px] rounded-xs border border-[#dedede] bg-[#ececec] pl-1 text-[11px] text-[#888] outline-none"
          />
          <span className="pointer-events-none absolute top-[4px] right-[3px] flex rotate-180"><Caret light /></span>
          <span className="pointer-events-none absolute right-[3px] bottom-[4px] flex"><Caret light /></span>
        </div>
      </div>
    </div>
  );
}

function FormatPanel() {
  return (
    <aside className="w-[242px] shrink-0">
      <div className="grid h-[26px] grid-cols-3 text-[10px] text-[#222]">
        <button type="button" className="font-bold text-black">填充</button>
        <button type="button" className="rounded-bl-xs bg-[#dcdcdc]">线条</button>
        <button type="button" className="bg-[#dcdcdc]">阴影</button>
      </div>
      <div className="px-[17px] pt-2 text-[10px] text-[#808080]">
        {fills.map((f, i) => (
          <label key={f} className="flex h-[29px] items-center gap-1">
            <input
              type="radio"
              name="fill"
              defaultChecked={i === 1}
              className="h-[10px] w-[10px] appearance-none rounded-full border border-[#dedede] bg-white checked:bg-[radial-gradient(circle,#b0b0b0_2px,#fff_3px)]"
            />
            {f}
          </label>
        ))}
        <div className="mt-[10px] flex h-5 items-center justify-between">
          <span>颜色:</span>
          <button type="button" aria-label="颜色" className="h-[21px] w-[52px] border border-[#e3e3e3] bg-white p-[2px]">
            <span className="block h-full bg-[#ebebeb]" />
          </button>
        </div>
        <SliderRow id="brightness" label="亮度:" value={50} />
        <SliderRow id="opacity" label="透明度:" value={0} />
      </div>
    </aside>
  );
}

/* ---------- status bar ---------- */

function StatusBar() {
  return (
    <footer className="flex h-[29px] shrink-0 items-center border-y border-[#dcdcdc] text-[10px] text-[#222]">
      <div className="flex h-5 w-[178px] shrink-0 items-center">
        <button type="button" aria-label="页面视图" className="flex w-[38px] justify-center">
          <Icon>
            <path d="M4.500 4h9v10h-9z" strokeWidth={2} />
            <path d="M1 3.500v11M17 3.500v11" strokeWidth={1.4} />
          </Icon>
        </button>
        <button type="button" className="flex h-full w-[103px] items-center justify-between border-l border-[#dcdcdc] pr-[5px] pl-2 text-[11px]">
          Page-1
          <Caret />
        </button>
        <button type="button" aria-label="新建页面" className="flex h-full flex-1 items-center justify-center border-x border-[#dcdcdc]">
          <Icon size={11}><path d="M9 2v14M2 9h14" strokeWidth={3} /></Icon>
        </button>
      </div>
      <button type="button" className="h-5 w-[69px] shrink-0 border-r border-[#dcdcdc] text-[11px] font-semibold text-[#0080ff]">
        Page-1
      </button>
      <div className="ml-auto flex items-center pr-[24px]">
        <button type="button" className="flex items-center gap-[4px]">
          <Icon size={15}>
            <path d="M1.500 5V1.500H5M13 1.500h3.500V5M16.500 13v3.500H13M5 16.500H1.500V13" strokeWidth={2} />
            <path d="M6 4.500h4L12.500 7v7H6z" fill="#888" stroke="none" />
          </Icon>
          专注
        </button>
        <button type="button" aria-label="播放" className="ml-[14px]">
          <Icon size={16}>
            <circle cx="9" cy="9" r="7.500" />
            <path d="M7 5l5.500 4L7 13z" fill="#666" stroke="none" />
          </Icon>
        </button>
        <button type="button" aria-label="缩小" className="ml-2">
          <Icon size={11}><path d="M2 9h14" strokeWidth={2.8} /></Icon>
        </button>
        <input
          type="range"
          aria-label="缩放"
          defaultValue={13}
          className={`mx-[5px] w-[70px] bg-[linear-gradient(to_right,#b4b4b4_14px,#d9d9d9_14px)] ${rangeClass}`}
        />
        <button type="button" aria-label="放大">
          <Icon size={11}><path d="M9 2v14M2 9h14" strokeWidth={2.8} /></Icon>
        </button>
        <button type="button" className="ml-3 flex items-center gap-[7px]">
          63%
          <Caret />
        </button>
        <button type="button" aria-label="全屏" className="ml-[14px]">
          <Icon size={15}><path d="M2 6.500V2.500h4M12 2.500h4v4M16 11.500v4h-4M6 15.500H2v-4" strokeWidth={2} /></Icon>
        </button>
        <button type="button" aria-label="适应宽度" className="ml-[6px]">
          <Icon size={15}>
            <path d="M1.500 2h15v14h-15z" strokeWidth={1.9} />
            <path d="M4.500 9h9M7 6.500L4.500 9 7 11.500M11 6.500L13.500 9 11 11.500" strokeWidth={1.4} />
          </Icon>
        </button>
      </div>
    </footer>
  );
}

export default function App() {
  return (
    <div className="flex h-screen -scale-x-100 flex-col overflow-hidden bg-[#f4f4f4] font-['Noto_Sans','Noto_Sans_CJK_SC',sans-serif] text-[#333]">
      <Toolbar />
      <div className="flex min-h-0 flex-1">
        <LibraryPanel />
        <Workspace />
        <SideStrip />
        <FormatPanel />
      </div>
      <StatusBar />
    </div>
  );
}
